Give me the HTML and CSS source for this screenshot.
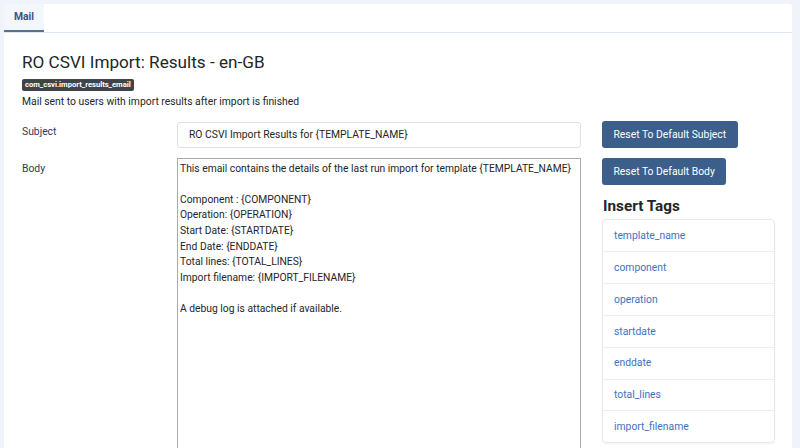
FILE: index.html
```html
<!DOCTYPE html>
<html lang="en">
<head>
<meta charset="utf-8">
<title>RO CSVI Import: Results - en-GB</title>
<link rel="stylesheet" href="styles.css">
</head>
<body>
<div class="panel">
  <div class="tabbar">
    <div class="tab">Mail</div>
  </div>
  <div class="content">
    <h1 class="title">RO CSVI Import: Results - en-GB</h1>
    <span class="badge">com_csvi.import_results_email</span>
    <p class="desc">Mail sent to users with import results after import is finished</p>
    <div class="form">
      <div class="fields">
        <div class="row">
          <label class="label">Subject</label>
          <input class="input" type="text" value="RO CSVI Import Results for {TEMPLATE_NAME}">
        </div>
        <div class="row row-body">
          <label class="label">Body</label>
          <textarea class="textarea">This email contains the details of the last run import for template {TEMPLATE_NAME}

Component : {COMPONENT}
Operation: {OPERATION}
Start Date: {STARTDATE}
End Date: {ENDDATE}
Total lines: {TOTAL_LINES}
Import filename: {IMPORT_FILENAME}

A debug log is attached if available.</textarea>
        </div>
      </div>
      <div class="aside">
        <button class="btn">Reset To Default Subject</button>
        <button class="btn btn-second">Reset To Default Body</button>
        <h2 class="tags-title">Insert Tags</h2>
        <ul class="tags">
          <li class="tag"><a href="#">template_name</a></li>
          <li class="tag"><a href="#">component</a></li>
          <li class="tag"><a href="#">operation</a></li>
          <li class="tag"><a href="#">startdate</a></li>
          <li class="tag"><a href="#">enddate</a></li>
          <li class="tag"><a href="#">total_lines</a></li>
          <li class="tag"><a href="#">import_filename</a></li>
        </ul>
      </div>
    </div>
  </div>
</div>
</body>
</html>
```
FILE: styles.css
```css
html, body {
  margin: 0;
  padding: 0;
}
body {
  background: #f0f3fa;
  font-family: Roboto, "Liberation Sans", sans-serif;
  font-size: 10.35px;
  line-height: 15.6px;
  color: #22262a;
  height: 448px;
  overflow: hidden;
}
.panel {
  margin: 4px 8px 0 4px;
  background: #ffffff;
  border-radius: 3px 3px 0 0;
  height: 460px;
}
.tabbar {
  display: flex;
  border-bottom: 1px solid #e1e7f0;
  box-sizing: border-box;
  height: 29px;
}
.tab {
  background: #f3f6fa;
  color: #3a5479;
  font-weight: 700;
  padding: 0 10px;
  line-height: 26px;
  height: 28px;
  box-sizing: border-box;
  border-bottom: 2px solid #56708f;
  border-radius: 3px 0 0 0;
}
.content {
  padding: 19px 17px 0 18px;
}
.title {
  margin: 0;
  font-size: 17.15px;
  line-height: 21px;
  font-weight: 400;
  color: #22262a;
}
.badge {
  display: inline-block;
  margin-top: 6px;
  background: #3f4448;
  color: #ffffff;
  font-size: 7.6px;
  font-weight: 700;
  line-height: 12px;
  height: 12px;
  padding: 0 3px;
  border-radius: 2px;
  vertical-align: top;
}
.desc {
  margin: 3px 0 0;
}
.form {
  display: flex;
  margin-top: 11px;
}
.fields {
  width: 559px;
  flex: none;
}
.row {
  display: flex;
}
.row-body {
  margin-top: 10px;
}
.label {
  width: 155px;
  flex: none;
  padding-top: 3px;
  color: #1f3a63;
}
.input {
  margin: 1px 0 0;
  width: 404px;
  height: 26px;
  box-sizing: border-box;
  border: 1px solid #dde1e6;
  border-radius: 3px;
  padding: 0 11px;
  font-family: inherit;
  font-size: 10.35px;
  color: #22262a;
  outline: none;
}
.textarea {
  margin: 0;
  width: 404px;
  height: 300px;
  box-sizing: border-box;
  border: 1px solid #a9a9b8;
  border-radius: 0;
  padding: 2px 2px;
  font-family: inherit;
  font-size: 10.3px;
  line-height: 15.6px;
  color: #22262a;
  resize: none;
  outline: none;
}
.aside {
  width: 173px;
  margin-left: 21px;
  flex: none;
  display: flex;
  flex-direction: column;
  align-items: flex-start;
}
.btn {
  background: #3c5e8b;
  color: #ffffff;
  border: 0;
  border-radius: 3px;
  height: 27px;
  padding: 0 11.5px;
  font-family: inherit;
  font-size: 10.35px;
  line-height: 27px;
}
.btn-second {
  margin-top: 10px;
}
.tags-title {
  margin: 12px 0 0 1px;
  font-size: 15.3px;
  line-height: 18px;
  font-weight: 700;
  color: #22262a;
}
.tags {
  list-style: none;
  margin: 4px 0 0;
  padding: 0;
  width: 173px;
  border: 1px solid #e6e8ec;
  border-radius: 4px;
  box-shadow: 0 1px 2px rgba(0,0,0,0.05);
  box-sizing: border-box;
}
.tag {
  height: 31.8px;
  box-sizing: border-box;
  display: flex;
  align-items: center;
  padding: 0 11px;
}
.tag + .tag {
  border-top: 1px solid #eceef1;
}
.tag a {
  color: #3f72c2;
  text-decoration: none;
}
```
